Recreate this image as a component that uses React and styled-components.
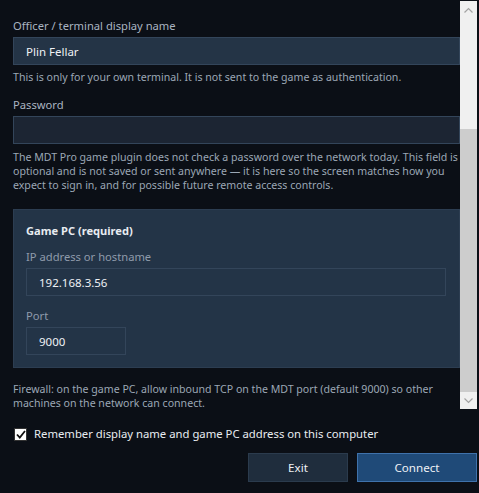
import React from "react";
import styled, { createGlobalStyle } from "styled-components";

const Global = createGlobalStyle`
  html, body {
    margin: 0;
    padding: 0;
    background: #0b0f16;
  }
  body {
    font-family: "Noto Sans", "Open Sans", sans-serif;
    font-size: 11.2px;
    color: #dfe4ea;
  }
`;

const Window = styled.div`
  width: 479px;
  height: 493px;
  display: flex;
  flex-direction: column;
  background: #0b0f16;
  overflow: hidden;
`;

const ScrollArea = styled.div`
  display: flex;
  flex-shrink: 0;
  height: 408px;
  margin-top: 1px;
  padding-right: 2px;
`;

const Content = styled.div`
  flex: 1;
  overflow: hidden;
  padding: 17px 0 0 13px;
  display: flex;
  flex-direction: column;
  & > * {
    flex-shrink: 0;
  }
`;

const Label = styled.div`
  line-height: 16px;
  color: ${(p) => (p.$muted ? "#8f9bab" : "#aab4c1")};
  margin-top: ${(p) => p.$top || 0}px;
  flex-shrink: 0;
`;

const Input = styled.div`
  box-sizing: border-box;
  flex-shrink: 0;
  height: 28px;
  width: ${(p) => p.$width || "100%"};
  margin-top: 3px;
  padding: 0 12px;
  display: flex;
  align-items: center;
  background: ${(p) => p.$bg || "#1c2533"};
  border: 1px solid #33455a;
  color: #eef1f5;
  font-size: 11.5px;
`;

const Hint = styled.p`
  margin: ${(p) => p.$top || 5}px 0 0;
  line-height: 14px;
  color: #9ba7b5;
  font-size: 10.6px;
`;

const Panel = styled.div`
  margin-top: 17px;
  box-sizing: border-box;
  background: #233447;
  border: 1px solid #2c3d51;
  padding: 13px 13px 12px 12px;
  display: flex;
  flex-direction: column;
`;

const PanelTitle = styled.div`
  font-weight: 700;
  font-size: 11.1px;
  line-height: 16px;
  color: #e8ecf1;
`;

const Scrollbar = styled.div`
  width: 17px;
  display: flex;
  flex-direction: column;
  background: #f0f0f0;
`;

const Arrow = styled.div`
  height: 17px;
  display: flex;
  align-items: center;
  justify-content: center;
`;

const Track = styled.div`
  height: ${(p) => p.$h}px;
`;

const Thumb = styled.div`
  flex: 1;
  background: #cdcdcd;
`;

const Footer = styled.div`
  display: flex;
  flex-direction: column;
  padding: 0 2px 0 14px;
`;

const CheckRow = styled.label`
  display: flex;
  align-items: center;
  gap: 7px;
  margin-top: 17px;
  color: #e8ecf1;
  font-size: 11.3px;
  line-height: 16px;
`;

const Box = styled.span`
  box-sizing: border-box;
  width: 13px;
  height: 13px;
  background: #fff;
  border: 1px solid #333;
  display: flex;
  align-items: center;
  justify-content: center;
`;

const Buttons = styled.div`
  display: flex;
  justify-content: flex-end;
  gap: 9px;
  margin-top: 11px;
`;

const Button = styled.button`
  box-sizing: border-box;
  height: 29px;
  width: ${(p) => (p.$primary ? 120 : 100)}px;
  background: ${(p) => (p.$primary ? "#1f4a78" : "#1f2d3d")};
  border: 1px solid ${(p) => (p.$primary ? "#3f72ab" : "#2b3b4d")};
  color: #eef1f5;
  font-family: inherit;
  font-size: 11.6px;
  padding: 0;
`;

const Chevron = ({ up }) => (
  <svg width="9" height="6" viewBox="0 0 9 6">
    <path
      d={up ? "M0.5 5.5 L4.5 1.5 L8.5 5.5" : "M0.5 0.5 L4.5 4.5 L8.5 0.5"}
      fill="none"
      stroke="#a3a3a3"
      strokeWidth="1.2"
    />
  </svg>
);

export default function App() {
  return (
    <>
      <Global />
      <Window>
        <ScrollArea>
          <Content>
            <Label>Officer / terminal display name</Label>
            <Input $bg="#243446">Plin Fellar</Input>
            <Hint>
              This is only for your own terminal. It is not sent to the game as
              authentication.
            </Hint>

            <Label $top={13}>Password</Label>
            <Input />
            <Hint $top={6}>
              The MDT Pro game plugin does not check a password over the network
              today. This field is optional and is not saved or sent anywhere —
              it is here so the screen matches how you expect to sign in, and for
              possible future remote access controls.
            </Hint>

            <Panel>
              <PanelTitle>Game PC (required)</PanelTitle>
              <Label $muted $top={10}>
                IP address or hostname
              </Label>
              <Input $bg="#233447">192.168.3.56</Input>
              <Label $muted $top={12}>
                Port
              </Label>
              <Input $bg="#233447" $width="100px">
                9000
              </Input>
            </Panel>

            <Hint $top={14}>
              Firewall: on the game PC, allow inbound TCP on the MDT port
              (default 9000) so other machines on the network can connect.
            </Hint>
          </Content>
          <Scrollbar>
            <Arrow>
              <Chevron up />
            </Arrow>
            <Track $h={111} />
            <Thumb />
            <Track $h={0} />
            <Arrow>
              <Chevron />
            </Arrow>
          </Scrollbar>
        </ScrollArea>

        <Footer>
          <CheckRow>
            <Box>
              <svg width="10" height="9" viewBox="0 0 10 9">
                <path
                  d="M1 4.5 L3.8 7.5 L9 1"
                  fill="none"
                  stroke="#111"
                  strokeWidth="1.8"
                />
              </svg>
            </Box>
            Remember display name and game PC address on this computer
          </CheckRow>
          <Buttons>
            <Button>Exit</Button>
            <Button $primary>Connect</Button>
          </Buttons>
        </Footer>
      </Window>
    </>
  );
}
